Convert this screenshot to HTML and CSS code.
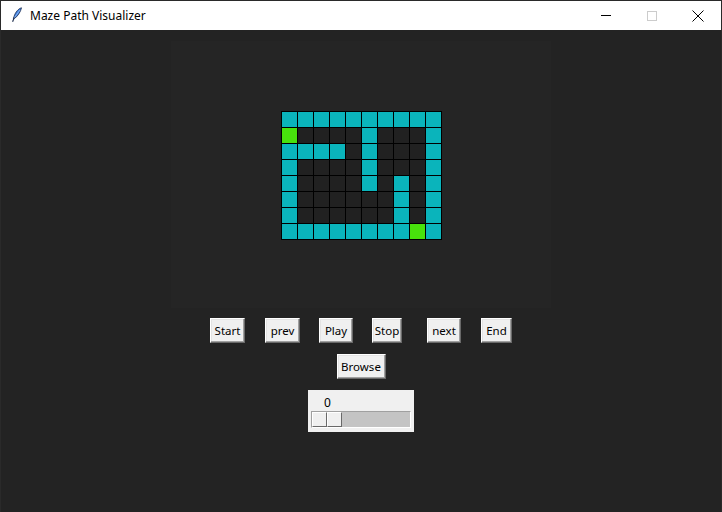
FILE: index.html
```html
<!DOCTYPE html>
<html>
<head>
<meta charset="utf-8">
<title>Maze Path Visualizer</title>
<link rel="stylesheet" href="styles.css">
</head>
<body>
<div class="window">
  <div class="titlebar">
    <svg class="feather" width="12" height="16" viewBox="0 0 12 16">
      <path d="M10.5 0.8 C7.5 1.5 4.5 5 3 9.5 L2.4 11.5 L4.2 11 C7 8.5 9.6 5 10.5 0.8 Z" fill="#3d7fe0" stroke="#1b2a4a" stroke-width="0.8"/>
      <path d="M9 3 L3.5 10.5" stroke="#a9c8f5" stroke-width="0.7"/>
      <path d="M3.2 10.8 L1.6 14.8" stroke="#1b2a4a" stroke-width="1.1"/>
    </svg>
    <span class="title">Maze Path Visualizer</span>
    <div class="controls">
      <span class="ctl ctl-min"><span class="min-line"></span></span>
      <span class="ctl ctl-max"><span class="max-box"></span></span>
      <span class="ctl ctl-close">
        <svg width="12" height="12" viewBox="0 0 12 12"><path d="M0.5 0.5 L11.5 11.5 M11.5 0.5 L0.5 11.5" stroke="#000" stroke-width="1"/></svg>
      </span>
    </div>
  </div>
  <div class="content">
    <div class="canvas">
      <div class="maze" id="maze"></div>
    </div>
    <div class="btn-row">
      <button class="btn btn-start">Start</button>
      <button class="btn btn-prev">prev</button>
      <button class="btn btn-play">Play</button>
      <button class="btn btn-stop">Stop</button>
      <button class="btn btn-next">next</button>
      <button class="btn btn-end">End</button>
    </div>
    <div class="btn-row browse-row">
      <button class="btn btn-browse">Browse</button>
    </div>
    <div class="scale">
      <div class="scale-value">0</div>
      <div class="trough">
        <div class="slider"><span class="slider-half"></span><span class="slider-half"></span></div>
      </div>
    </div>
  </div>
</div>
<script>
  var rows = [
    "CCCCCCCCCC",
    "GDDDDCDDDC",
    "CCCCDCDDDC",
    "CDDDDCDDDC",
    "CDDDDCDCDC",
    "CDDDDDDCDC",
    "CDDDDDDCDC",
    "CCCCCCCCGC"
  ];
  var maze = document.getElementById("maze");
  var cls = { C: "cell wall", G: "cell goal", D: "cell open" };
  rows.forEach(function (r) {
    for (var i = 0; i < r.length; i++) {
      var d = document.createElement("div");
      d.className = cls[r[i]];
      maze.appendChild(d);
    }
  });
</script>
</body>
</html>
```
FILE: styles.css
```css
html, body {
  margin: 0;
  padding: 0;
}
body {
  width: 722px;
  height: 512px;
  overflow: hidden;
  font-family: "Noto Sans", "DejaVu Sans", sans-serif;
  font-size: 12px;
}
.window {
  box-sizing: border-box;
  width: 722px;
  height: 512px;
  border: 1px solid #2a2a2a;
  border-bottom: none;
  display: flex;
  flex-direction: column;
  background: #232323;
}
.titlebar {
  height: 29px;
  background: #ffffff;
  display: flex;
  align-items: center;
  flex-shrink: 0;
}
.feather {
  margin-left: 10px;
  margin-top: -2px;
}
.title {
  margin-left: 7px;
  font-size: 12px;
  color: #000;
  margin-top: -1px;
}
.controls {
  margin-left: auto;
  display: flex;
  height: 100%;
}
.ctl {
  width: 46px;
  height: 29px;
  display: flex;
  align-items: center;
  justify-content: center;
}
.min-line {
  width: 10px;
  height: 1px;
  background: #000;
}
.max-box {
  box-sizing: border-box;
  width: 10px;
  height: 10px;
  border: 1px solid #cccccc;
}
.ctl-close svg { display: block; }
.content {
  flex: 1;
  display: flex;
  flex-direction: column;
  align-items: center;
}
.canvas {
  margin-top: 11px;
  width: 380px;
  height: 267px;
  background: #252525;
  box-sizing: border-box;
  padding-top: 70px;
  display: flex;
  justify-content: center;
}
.maze {
  align-self: flex-start;
  display: grid;
  grid-template-columns: repeat(10, 15px);
  grid-auto-rows: 15px;
  gap: 1px;
  padding: 1px;
  background: #000;
  margin-left: 1px;
}
.cell.wall { background: #0ab4bb; }
.cell.goal { background: #48e20c; }
.cell.open { background: #212121; }
.btn-row {
  display: flex;
  margin-top: 10px;
}
.btn {
  box-sizing: border-box;
  height: 25px;
  padding: 0;
  margin: 0;
  background: #f0f0f0;
  border: 1px solid;
  border-color: #ffffff #696969 #696969 #ffffff;
  box-shadow: inset -1px -1px 0 #a0a0a0, inset 1px 1px 0 #e3e3e3;
  font-family: "Noto Sans", "DejaVu Sans", sans-serif;
  font-size: 11.5px;
  color: #000;
  line-height: 21px;
  text-align: center;
}
.btn-start { width: 35px; }
.btn-prev { width: 35px; margin-left: 20px; }
.btn-play { width: 34px; margin-left: 19px; }
.btn-stop { width: 30px; margin-left: 19px; }
.btn-next { width: 34px; margin-left: 25px; }
.btn-end { width: 31px; margin-left: 20px; }
.browse-row { margin-top: 11px; }
.btn-browse { width: 49px; margin-left: 0; }
.scale {
  margin-top: 11px;
  width: 106px;
  height: 42px;
  background: #f0f0f0;
  box-sizing: border-box;
  padding: 5px 3px 0 3px;
  display: flex;
  flex-direction: column;
}
.scale-value {
  height: 16px;
  line-height: 16px;
  padding-left: 13px;
  font-size: 12px;
  color: #000;
}
.trough {
  margin-top: 0;
  height: 17px;
  box-sizing: border-box;
  background: #c4c4c4;
  border: 1px solid;
  border-color: #a0a0a0 #ffffff #ffffff #a0a0a0;
  display: flex;
}
.slider {
  width: 30px;
  height: 15px;
  display: flex;
}
.slider-half {
  box-sizing: border-box;
  width: 15px;
  height: 15px;
  background: #f0f0f0;
  border: 1px solid;
  border-color: #ffffff #696969 #696969 #ffffff;
}
```
